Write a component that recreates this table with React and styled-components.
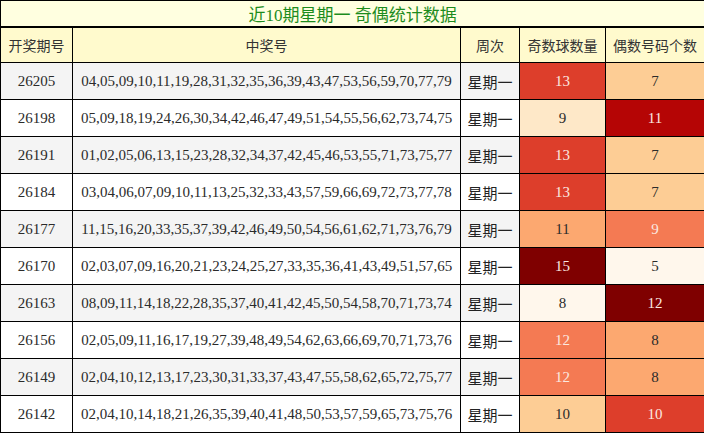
import React from 'react';
import styled, { createGlobalStyle } from 'styled-components';

const GlobalStyle = createGlobalStyle`
  html, body {
    margin: 0;
    padding: 0;
    background: #fff;
  }
`;

const rows = [
  ['26205', '04,05,09,10,11,19,28,31,32,35,36,39,43,47,53,56,59,70,77,79', 13, 7],
  ['26198', '05,09,18,19,24,26,30,34,42,46,47,49,51,54,55,56,62,73,74,75', 9, 11],
  ['26191', '01,02,05,06,13,15,23,28,32,34,37,42,45,46,53,55,71,73,75,77', 13, 7],
  ['26184', '03,04,06,07,09,10,11,13,25,32,33,43,57,59,66,69,72,73,77,78', 13, 7],
  ['26177', '11,15,16,20,33,35,37,39,42,46,49,50,54,56,61,62,71,73,76,79', 11, 9],
  ['26170', '02,03,07,09,16,20,21,23,24,25,27,33,35,36,41,43,49,51,57,65', 15, 5],
  ['26163', '08,09,11,14,18,22,28,35,37,40,41,42,45,50,54,58,70,71,73,74', 8, 12],
  ['26156', '02,05,09,11,16,17,19,27,39,48,49,54,62,63,66,69,70,71,73,76', 12, 8],
  ['26149', '02,04,10,12,13,17,23,30,31,33,37,43,47,55,58,62,65,72,75,77', 12, 8],
  ['26142', '02,04,10,14,18,21,26,35,39,40,41,48,50,53,57,59,65,73,75,76', 10, 10],
];

// OrRd steps, lightest to darkest
const palette = ['#fff7ec', '#fee8c8', '#fdcd95', '#fca870', '#f47a53', '#dd3e2b', '#b50505', '#7f0000'];

const oddColor = {
  8: palette[0],
  9: palette[1],
  10: palette[2],
  11: palette[3],
  12: palette[4],
  13: palette[5],
  14: palette[6],
  15: palette[7],
};

const evenColor = {
  5: palette[0],
  6: palette[1],
  7: palette[2],
  8: palette[3],
  9: palette[4],
  10: palette[5],
  11: palette[6],
  12: palette[7],
};

const Table = styled.table`
  width: 704px;
  border-collapse: collapse;
  table-layout: fixed;
  font-family: 'Liberation Serif', 'Noto Sans CJK SC', serif;
  color: #333;

  td,
  th {
    border: 1px solid #000;
    text-align: center;
    padding: 0;
  }
`;

const TitleCell = styled.th`
  height: 25px;
  background: #ffffe0;
  color: #1d8c1d;
  font-size: 17px;
  font-weight: normal;
  border-bottom: 2px solid #000 !important;
`;

const HeadCell = styled.th`
  height: 34px;
  background: #fffacd;
  font-size: 14px;
  font-weight: normal;
  font-family: 'Noto Sans CJK SC', 'Noto Sans', sans-serif;
  color: #333;
`;

const Row = styled.tr`
  height: 37px;
  background: ${(p) => (p.$striped ? '#f4f4f4' : '#fff')};
`;

const Cell = styled.td`
  font-size: 15px;
  color: ${(p) => (p.$week ? '#222' : '#2b2b2b')};
  font-family: ${(p) =>
    p.$week ? "'Noto Sans CJK SC', sans-serif" : "'Liberation Serif', serif"};
  white-space: nowrap;
`;

const HeatCell = styled.td`
  font-size: 15px;
  background: ${(p) => p.$bg};
  color: ${(p) => (p.$dark ? '#fbe9e0' : '#2b2b2b')};
`;

function isDark(bg) {
  return palette.indexOf(bg) >= 4;
}

export default function App() {
  return (
    <>
      <GlobalStyle />
      <Table>
        <colgroup>
          <col style={{ width: 72 }} />
          <col style={{ width: 388 }} />
          <col style={{ width: 59 }} />
          <col style={{ width: 86 }} />
          <col style={{ width: 99 }} />
        </colgroup>
        <thead>
          <tr>
            <TitleCell colSpan={5}>近10期星期一 奇偶统计数据</TitleCell>
          </tr>
          <tr>
            <HeadCell>开奖期号</HeadCell>
            <HeadCell>中奖号</HeadCell>
            <HeadCell>周次</HeadCell>
            <HeadCell>奇数球数量</HeadCell>
            <HeadCell>偶数号码个数</HeadCell>
          </tr>
        </thead>
        <tbody>
          {rows.map(([issue, nums, odd, even], i) => {
            const oddBg = oddColor[odd];
            const evenBg = evenColor[even];
            return (
              <Row key={issue} $striped={i % 2 === 0}>
                <Cell>{issue}</Cell>
                <Cell>{nums}</Cell>
                <Cell $week>星期一</Cell>
                <HeatCell $bg={oddBg} $dark={isDark(oddBg)}>
                  {odd}
                </HeatCell>
                <HeatCell $bg={evenBg} $dark={isDark(evenBg)}>
                  {even}
                </HeatCell>
              </Row>
            );
          })}
        </tbody>
      </Table>
    </>
  );
}
